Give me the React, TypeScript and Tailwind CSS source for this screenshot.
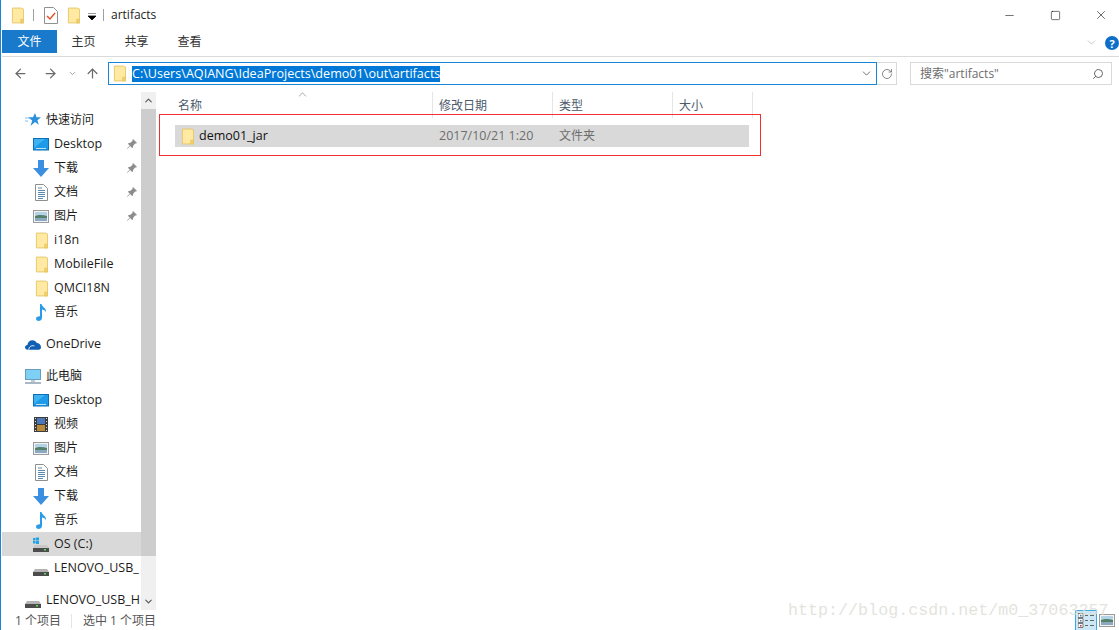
import { ArrowLeft, ArrowRight, ArrowUp, ChevronDown, ChevronUp, Minus, RotateCw, Search, Square, X } from "lucide-react";

function Folder({ className = "" }: { className?: string }) {
  return (
    <svg width="13" height="17" viewBox="0 0 14 17" className={className}>
      <path d="M1.500.5h9.500l2.500 1v15h-12z" fill="#ffe9a3" stroke="#e6c766" />
      <path d="M10.500 16.500v-4h3v4z" fill="#f3d06a" stroke="#e6c766" />
    </svg>
  );
}

function DesktopIcon() {
  return (
    <svg width="16" height="13" viewBox="0 0 16 13">
      <rect x=".5" y=".5" width="15" height="11.500" fill="#1e9be8" stroke="#0c6fb8" />
      <path d="M3 10.500h10" stroke="#bfe4fa" />
      <path d="M1 10 12 1H1z" fill="#3fb2f2" />
    </svg>
  );
}

function DownIcon() {
  return (
    <svg width="16" height="17" viewBox="0 0 16 17">
      <path d="M5 0h6v8h5l-8 9-8-9h5z" fill="#3a8fe0" />
    </svg>
  );
}

function DocIcon() {
  return (
    <svg width="13" height="17" viewBox="0 0 13 17">
      <path d="M.5.5h8l4 4v12H.5z" fill="#fff" stroke="#8f8f8f" />
      <path d="M3 4h4M3 6.500h7M3 8.500h7M3 10.500h7M3 12.500h7M3 14.500h5" stroke="#5a8ab0" />
    </svg>
  );
}

function PictureIcon() {
  return (
    <svg width="16" height="13" viewBox="0 0 16 13">
      <rect x=".5" y=".5" width="15" height="12" fill="#f4f4f4" stroke="#9a9a9a" />
      <rect x="2" y="2" width="12" height="4" fill="#b4d2e6" />
      <path d="M2 6c3-1.500 8-1.500 12 0v2H2z" fill="#54806a" />
      <rect x="2" y="8" width="12" height="3" fill="#8aa8c0" />
    </svg>
  );
}

function MusicIcon() {
  return (
    <svg width="11" height="17" viewBox="0 0 11 17">
      <path d="M4 0h1.500c.5 3 5 4 4.500 8-1-1.500-2.500-2.500-4-2.500V14c0 2-2 3-3.500 3S0 16 0 14.500 2 12 4 12.300z" fill="#2a9be8" />
    </svg>
  );
}

function MovieIcon() {
  return (
    <svg width="14" height="15" viewBox="0 0 14 15">
      <rect width="14" height="15" fill="#3c3c3c" />
      <rect x="3" y="1" width="8" height="6" fill="#4a78b8" />
      <rect x="3" y="8" width="8" height="6" fill="#b88a3a" />
      <path d="M1 1.500h1M1 4.500h1M1 7.500h1M1 10.500h1M1 13.500h1M12 1.500h1M12 4.500h1M12 7.500h1M12 10.500h1M12 13.500h1" stroke="#ddd" />
    </svg>
  );
}

function DriveIcon({ os = false }: { os?: boolean }) {
  return (
    <svg width="16" height="15" viewBox="0 0 16 15">
      {os && <path d="M0 1h2.500v2.500H0zM3 .600h3v2.900H3zM0 4h2.500v2.500H0zM3 4h3v2.900H3z" fill="#1fa3e6" />}
      <path d="M2 8h12l2 3H0z" fill={os ? "#c8c8c8" : "#b4b4b4"} />
      <rect y="11" width="16" height="4" fill="#4c4c4c" />
      <rect x="11" y="12" width="2" height="1.500" fill="#5ee05e" />
    </svg>
  );
}

function StarIcon() {
  return (
    <svg width="16" height="14" viewBox="0 0 16 14">
      <path d="M10 0l1.500 4.300H16l-3.600 2.900 1.400 4.600L10 9l-4.500 4 1.700-5.500L3 4.300h5z" fill="#2a8fdc" />
      <path d="M0 5h4M0 8h3" stroke="#7cc0f0" />
    </svg>
  );
}

function CloudIcon() {
  return (
    <svg width="17" height="11" viewBox="0 0 17 11">
      <path d="M3 11C1 11 0 10 0 8.500S1 6 2.500 6C3 3 5 1 8 1c2 0 3.500 1 4.500 3 2.500 0 4.500 2 4.500 4.300 0 1.700-1 2.700-2.500 2.700z" fill="#0f5fb4" />
      <path d="M4 11c0-3 3-5 6-4" stroke="#fff" fill="none" />
    </svg>
  );
}

function MonitorIcon() {
  return (
    <svg width="16" height="15" viewBox="0 0 16 15">
      <rect x=".5" y=".5" width="15" height="10" fill="#7fd0f5" stroke="#6a9cc0" />
      <path d="M6 11h4v2H6z" fill="#b8cede" />
      <rect y="13" width="16" height="2" fill="#a8b8c4" />
    </svg>
  );
}

function PinIcon() {
  return (
    <svg width="10" height="10" viewBox="0 0 10 10">
      <path d="M6 0l4 4-1 .5-1 0-2 2.500v1.500L5 9 3.200 7 .5 9.700 0 9.500 2.800 6.600 1 5l.5-1h1.500l2.500-2V1z" fill="#8c8c8c" />
    </svg>
  );
}

function NavRow({ icon, label, pin, active, top }: { icon: React.ReactNode; label: string; pin?: boolean; active?: boolean; top?: boolean }) {
  // latin labels run a little wider than the CJK ones in the shot
  const latin = /^[\x00-\x7f]+$/.test(label);
  return (
    <div className={`flex h-6 shrink-0 items-center ${top ? "pl-[23px]" : "pl-[31px]"} ${active ? "bg-[#d9d9d9]" : ""}`}>
      <span className="mr-[5px] flex w-[16px] shrink-0 items-center justify-center">{icon}</span>
      <span className={`flex-1 whitespace-nowrap text-[#1c1c1c] ${latin ? "text-[12.5px]" : "text-[12px]"}`}>{label}</span>
      {pin && <span className="mr-[4px] shrink-0"><PinIcon /></span>}
    </div>
  );
}

function Header({ label, cls }: { label: string; cls: string }) {
  return (
    <div className={`flex h-[26px] items-center border-r border-[#e5e5e5] pt-[2px] text-[#4c5a6c] ${cls}`}>{label}</div>
  );
}

export default function App() {
  return (
    <div className="relative flex h-[630px] w-[1119px] flex-col overflow-hidden border-l border-[#1a86d8] bg-white pl-px font-['Open_Sans','Noto_Sans_CJK_SC',sans-serif] text-[12px] text-black">
      {/* title bar */}
      <div className="flex h-[30px] shrink-0 items-center pl-[9px]">
        <Folder />
        <span className="ml-[9px] h-[12px] w-px bg-[#a0a0a0]" />
        <svg width="14" height="17" viewBox="0 0 14 17" className="ml-[10px]">
          <path d="M.5.5h9l4 4v12H.5z" fill="#fff" stroke="#909090" />
          <path d="M3 9l3 3 5-6" fill="none" stroke="#e0562a" strokeWidth="1.500" />
        </svg>
        <Folder className="ml-[9px]" />
        <svg width="8" height="7" viewBox="0 0 8 7" className="ml-[8px] mt-[2px]">
          <path d="M0 0h8M0 3h8L4 7z" stroke="#000" fill="#000" strokeWidth=".8" />
        </svg>
        <span className="ml-[7px] h-[12px] w-px bg-[#a0a0a0]" />
        <span className="ml-[7px] text-[12px] text-[#222]">artifacts</span>
        <div className="-mr-[5px] ml-auto flex items-center">
          <span className="flex h-[30px] w-[46px] items-center justify-center"><Minus size={13} strokeWidth={1} /></span>
          <span className="flex h-[30px] w-[46px] items-center justify-center"><Square size={11} strokeWidth={1.2} /></span>
          <span className="flex h-[30px] w-[46px] items-center justify-center"><X size={14} strokeWidth={1} /></span>
        </div>
      </div>
      {/* ribbon tabs */}
      <div className="flex h-[27px] shrink-0 border-b border-[#dadada]">
        <div className="flex h-[23px] w-[55px] items-center justify-center bg-[#1979ca] pt-px text-white">文件</div>
        <div className="flex h-[23px] w-[53px] items-center justify-center pt-px text-[#333]">主页</div>
        <div className="flex h-[23px] w-[53px] items-center justify-center pt-px text-[#333]">共享</div>
        <div className="flex h-[23px] w-[53px] items-center justify-center pt-px text-[#333]">查看</div>
        <ChevronDown size={13} strokeWidth={1.2} className="ml-auto mr-[7px] mt-[6px] text-[#a8a8a8]" />
        <span className="mt-[6px] flex h-[14px] w-[14px] items-center justify-center rounded-full bg-[#0f6fc6] text-[11px] font-bold leading-none text-white">?</span>
      </div>
      {/* address row */}
      <div className="mb-[2px] flex h-[33px] shrink-0 items-center">
        <ArrowLeft size={15} strokeWidth={2} className="ml-[11px] text-[#6a6a6a]" />
        <ArrowRight size={15} strokeWidth={2} className="ml-[15px] text-[#6a6a6a]" />
        <ChevronDown size={9} strokeWidth={2} className="ml-[10px] text-[#8a8a8a]" />
        <ArrowUp size={15} strokeWidth={2} className="ml-[8px] text-[#6a6a6a]" />
        <div className="ml-[8px] flex h-[23px] w-[769px] items-center border border-[#1a86d8] pl-[4px]">
          <Folder />
          <span className="ml-[6px] bg-[#0078d7] text-[12.6px] leading-[16px] text-white">C:\Users\AQIANG\IdeaProjects\demo01\out\artifacts</span>
          <ChevronDown size={13} strokeWidth={1.4} className="ml-auto mr-[3px] text-[#444]" />
        </div>
        <div className="flex h-[23px] w-[20px] items-center justify-center border border-l-0 border-[#d9d9d9]">
          <RotateCw size={12} strokeWidth={1.6} className="text-[#6a6a6a]" />
        </div>
        <div className="ml-[13px] flex h-[23px] w-[202px] items-center justify-between border border-[#d9d9d9] pl-[9px] pr-[7px] text-[#6d6d6d]">
          <span>搜索"artifacts"</span>
          <Search size={12} strokeWidth={2} className="-scale-x-100 text-[#666]" />
        </div>
      </div>
      {/* body */}
      <div className="flex min-h-0 flex-1">
        <div className="flex w-[139px] shrink-0 flex-col overflow-hidden pt-[16px]">
          <NavRow top icon={<StarIcon />} label="快速访问" />
          <NavRow icon={<DesktopIcon />} label="Desktop" pin />
          <NavRow icon={<DownIcon />} label="下载" pin />
          <NavRow icon={<DocIcon />} label="文档" pin />
          <NavRow icon={<PictureIcon />} label="图片" pin />
          <NavRow icon={<Folder />} label="i18n" />
          <NavRow icon={<Folder />} label="MobileFile" />
          <NavRow icon={<Folder />} label="QMCI18N" />
          <NavRow icon={<MusicIcon />} label="音乐" />
          <div className="h-2 shrink-0" />
          <NavRow top icon={<CloudIcon />} label="OneDrive" />
          <div className="h-2 shrink-0" />
          <NavRow top icon={<MonitorIcon />} label="此电脑" />
          <NavRow icon={<DesktopIcon />} label="Desktop" />
          <NavRow icon={<MovieIcon />} label="视频" />
          <NavRow icon={<PictureIcon />} label="图片" />
          <NavRow icon={<DocIcon />} label="文档" />
          <NavRow icon={<DownIcon />} label="下载" />
          <NavRow icon={<MusicIcon />} label="音乐" />
          <NavRow active icon={<DriveIcon os />} label="OS (C:)" />
          <NavRow icon={<DriveIcon />} label="LENOVO_USB_" />
          <div className="h-2 shrink-0" />
          <NavRow top icon={<DriveIcon />} label="LENOVO_USB_H" />
        </div>
        {/* scrollbar */}
        <div className="flex w-[15px] shrink-0 flex-col bg-[#f0f0f0]">
          <div className="flex h-[17px] items-center justify-center"><ChevronUp size={11} strokeWidth={2.4} className="text-[#555]" /></div>
          <div className="h-[447px] bg-[#cdcdcd]" />
          <div className="mt-auto flex h-[17px] items-center justify-center"><ChevronDown size={11} strokeWidth={2.4} className="text-[#555]" /></div>
        </div>
        {/* file list */}
        <div className="relative min-w-0 flex-1 pl-[15px]">
          <div className="flex">
            <Header label="名称" cls="w-[262px] pl-[7px]" />
            <Header label="修改日期" cls="w-[120px] pl-[6px]" />
            <Header label="类型" cls="w-[120px] pl-[6px]" />
            <Header label="大小" cls="w-[80px] pl-[6px]" />
          </div>
          <ChevronUp size={13} strokeWidth={1.2} className="absolute left-[140px] top-[-4px] text-[#777]" />
          <div className="ml-[4px] mt-[7px] flex h-[22px] w-[574px] items-center bg-[#d9d9d9]">
            <span className="ml-[6px] flex w-[18px] shrink-0"><Folder /></span>
            <span className="w-[240px] text-[12.5px] text-[#111]">demo01_jar</span>
            <span className="w-[120px] text-[12.5px] text-[#6d6d6d]">2017/10/21 1:20</span>
            <span className="text-[#6d6d6d]">文件夹</span>
          </div>
          <div className="absolute left-[3px] top-[22px] h-[42px] w-[602px] border border-[#f03030]" />
        </div>
      </div>
      {/* status bar */}
      <div className="flex h-[20px] shrink-0 items-center pl-[13px] pt-px text-[#555]">
        <span>1 个项目</span>
        <span className="ml-[10px] h-[14px] w-px bg-[#e4e4e4]" />
        <span className="ml-[11px]">选中 1 个项目</span>
        <div className="ml-auto mr-[3px] flex items-center gap-[1px]">
          <span className="flex h-[21px] w-[22px] items-center justify-center border border-[#3fa8de] bg-[#cce8f6]">
            <svg width="16" height="15" viewBox="0 0 16 15">
              <path d="M0 .5h5v4H0zM0 5.500h5v4H0zM0 10.500h5v4H0z" fill="#fff" stroke="#777" />
              <path d="M7 2.500h3M12 2.500h4M7 7.500h3M12 7.500h4M7 12.500h3M12 12.500h4" stroke="#666" />
              <path d="M2 2h1.500v1.500H2zM2 7h1.500v1.500H2z" fill="#3a7ac0" />
              <path d="M2 12h1.500v1.500H2z" fill="#d03030" />
            </svg>
          </span>
          <span className="flex h-[21px] w-[18px] items-center justify-center"><PictureIcon /></span>
        </div>
      </div>
      {/* watermark */}
      <span className="pointer-events-none absolute left-[787px] top-[601px] font-['Liberation_Mono',monospace] text-[16.7px] leading-[20px] text-[#dcdcd4]/80">http://blog.csdn.net/m0_37063257</span>
    </div>
  );
}
